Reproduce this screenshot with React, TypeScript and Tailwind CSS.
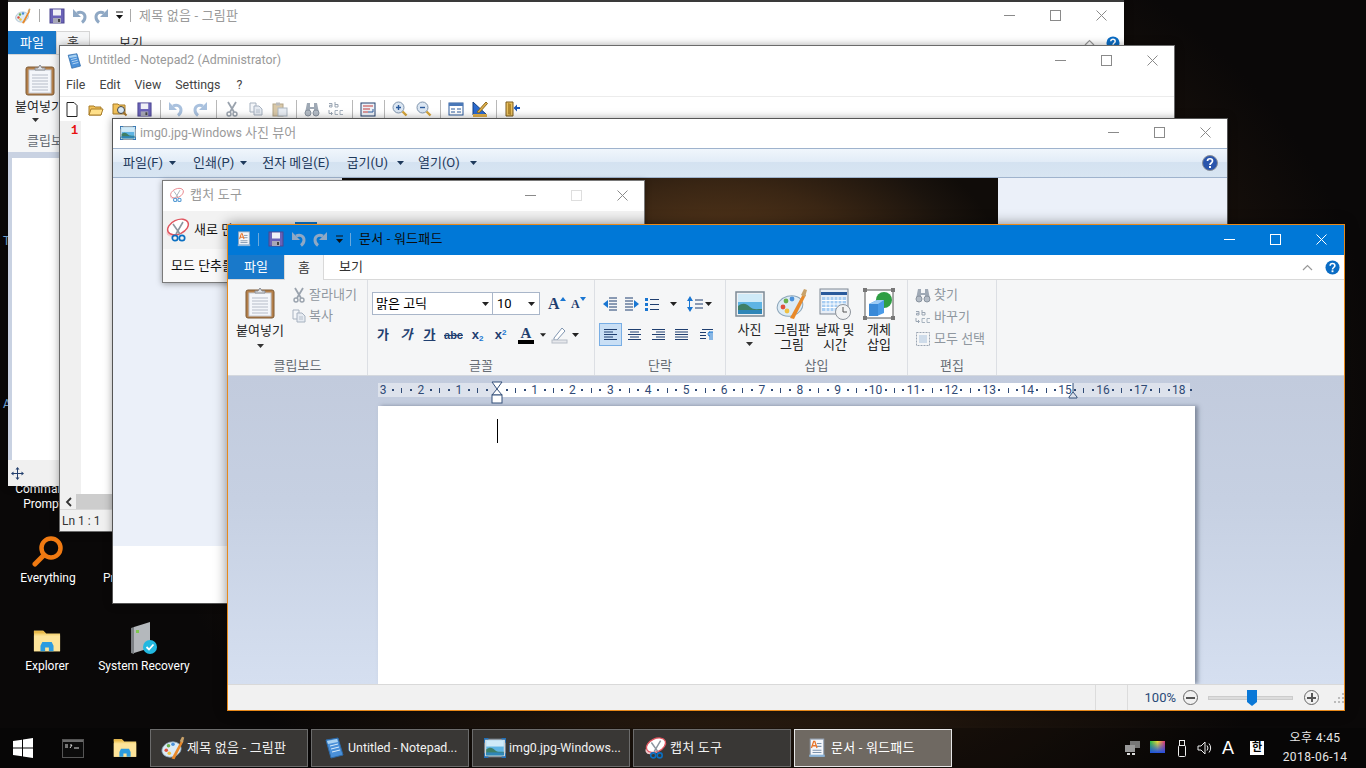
import type { ReactNode } from 'react';

// ---------- small drawn icons ----------
function Clipboard({ w = 30, h = 32 }: { w?: number; h?: number }) {
  return (
    <svg width={w} height={h} viewBox="0 0 30 32">
      <rect x="1" y="3" width="28" height="28" rx="2" fill="#b5804a" stroke="#7e5a35" />
      <rect x="4" y="6" width="22" height="23" fill="#f4f6fa" stroke="#c4c9d3" />
      <path d="M7 11h16M7 14h16M7 17h16M7 20h16M7 23h16M7 26h16" stroke="#b6bcc8" />
      <path d="M10 6V4h3l2-3 2 3h3v2z" fill="#e0e2e6" stroke="#8a8d93" />
    </svg>
  );
}

function Save({ size = 16 }: { size?: number }) {
  return (
    <svg width={size} height={size} viewBox="0 0 16 16">
      <rect x="1" y="1" width="14" height="14" fill="#6a62b8" stroke="#4c4790" />
      <rect x="4" y="1.500" width="8" height="6" fill="#f0f0f6" />
      <rect x="4" y="10" width="8" height="5" fill="#a8a8b8" />
      <rect x="9" y="11" width="2" height="3" fill="#444" />
    </svg>
  );
}

function Undo({ flip = false, color = '#8fa8c4' }: { flip?: boolean; color?: string }) {
  return (
    <svg width="16" height="16" viewBox="0 0 16 16" className={flip ? '-scale-x-100' : ''}>
      <path d="M1 1v8h8z" fill={color} />
      <path d="M5 5c4-2 8 0 8 4 0 2-1 4-3 5.500" fill="none" stroke={color} strokeWidth="3" />
    </svg>
  );
}

function QatDrop({ color = '#111' }: { color?: string }) {
  return (
    <svg width="9" height="9" viewBox="0 0 9 9">
      <path d="M1 1h7" stroke={color} />
      <path d="M1 4h7L4.500 8z" fill={color} />
    </svg>
  );
}

function Arrow({ color = '#333' }: { color?: string }) {
  return (
    <svg width="7" height="4" viewBox="0 0 7 4">
      <path d="M0 0h7L3.500 4z" fill={color} />
    </svg>
  );
}

function PaintIcon({ size = 16 }: { size?: number }) {
  return (
    <svg width={size} height={size} viewBox="0 0 32 32">
      <ellipse cx="14" cy="18" rx="13" ry="10" fill="#dcebf5" stroke="#8aa4b8" transform="rotate(-15 14 18)" />
      <circle cx="7" cy="19" r="2.400" fill="#e0503c" />
      <circle cx="10" cy="13" r="2.400" fill="#6ab04c" />
      <circle cx="16" cy="11" r="2.400" fill="#4a90d9" />
      <circle cx="11" cy="23" r="2.400" fill="#f0c040" />
      <path d="M14 30L27 6l3 1-12 24z" fill="#e8892a" />
      <path d="M25 7l3-6 3 1-2 7z" fill="#c9a26a" />
    </svg>
  );
}

function NotepadIcon({ size = 16 }: { size?: number }) {
  return (
    <svg width={size} height={size} viewBox="0 0 20 22">
      <path d="M2 3l12-2 5 17-12 3z" fill="#4a90d9" stroke="#2d6aa8" />
      <path d="M3 4l10-2 1 3-10 2z" fill="#a9d2f2" />
      <path d="M6 9l8-2M7 12l8-2M8 15l8-2" stroke="#d8ecfb" />
    </svg>
  );
}

function PictureIcon({ w = 16, h = 14, corners = false }: { w?: number; h?: number; corners?: boolean }) {
  return (
    <svg width={w} height={h} viewBox="0 0 30 26">
      <rect x="1" y="1" width="28" height="24" fill="#eef1f4" stroke="#7d8a96" strokeWidth="1.500" />
      <rect x="3" y="3" width="24" height="20" fill="#5fb4e4" />
      <rect x="3" y="3" width="24" height="8" fill="#cfeaf8" />
      <path d="M3 15c5-4 9-2 12 1s7 2 12 2v5H3z" fill="#3f7f66" />
      <rect x="3" y="19" width="24" height="4" fill="#2f86b8" />
      {corners && <path d="M0 6V0h6M24 0h6v6M30 20v6h-6M6 26H0v-6" fill="none" stroke="#1f6fb8" strokeWidth="2.500" />}
    </svg>
  );
}

function Scissors({ size = 16, faint = false }: { size?: number; faint?: boolean }) {
  return (
    <svg width={size} height={size} viewBox="0 0 26 26" className={faint ? 'opacity-70' : ''}>
      <ellipse cx="11" cy="13" rx="10" ry="6" fill="#f3c9cc" transform="rotate(-25 11 13)" />
      <ellipse cx="13" cy="10" rx="11" ry="7" fill="#fff" stroke="#e0555f" strokeWidth="1.400" transform="rotate(-25 13 10)" />
      <path d="M18 5L11 17M8 7l7 10" stroke="#8c96a0" strokeWidth="1.600" />
      <circle cx="10" cy="21" r="2.700" fill="none" stroke="#0a6fc2" strokeWidth="1.700" />
      <circle cx="17" cy="21" r="2.700" fill="none" stroke="#0a6fc2" strokeWidth="1.700" />
    </svg>
  );
}

function WordpadIcon({ size = 16 }: { size?: number }) {
  return (
    <svg width={size} height={size} viewBox="0 0 16 18">
      <rect x="2" y="1" width="12" height="15" fill="#f4f6fa" stroke="#9aa8ba" />
      <path d="M8 5h4M8 7.500h4M4 11h8M4 13h8" stroke="#7c93ad" />
      <path d="M3 9l2-6h1l2 6M4 7h3" fill="none" stroke="#e8762c" strokeWidth="1.200" />
      <rect x="1" y="15" width="14" height="2" fill="#8cb4d8" />
    </svg>
  );
}

function CutIcon() {
  return (
    <svg width="14" height="16" viewBox="0 0 14 16">
      <path d="M3 1l6 10M11 1L5 11" stroke="#9aa3ae" strokeWidth="1.800" />
      <circle cx="4" cy="13" r="2" fill="none" stroke="#9aa3ae" strokeWidth="1.400" />
      <circle cx="10" cy="13" r="2" fill="none" stroke="#9aa3ae" strokeWidth="1.400" />
    </svg>
  );
}

function CopyIcon({ size = 14 }: { size?: number }) {
  return (
    <svg width={size} height={size} viewBox="0 0 14 14">
      <path d="M1 1h6v9H1z" fill="#f4f6f9" stroke="#a7b2c0" />
      <path d="M5 4h5l3 3v6H5z" fill="#e6ebf2" stroke="#a7b2c0" />
      <path d="M7 8h4M7 10h4" stroke="#b6c0cc" />
    </svg>
  );
}

function Binoculars({ size = 16 }: { size?: number }) {
  return (
    <svg width={size} height={size} viewBox="0 0 16 16">
      <path d="M3 2h3v4h4V2h3l2 10h-5V8H6v4H1z" fill="#9fa9b5" />
      <circle cx="4" cy="12" r="3" fill="#b4bcc6" stroke="#89939f" />
      <circle cx="12" cy="12" r="3" fill="#b4bcc6" stroke="#89939f" />
    </svg>
  );
}

function ReplaceIcon() {
  return (
    <svg width="16" height="16" viewBox="0 0 16 16">
      <path d="M1 2.500h3M4 2.500V6H1.500V4.300H4M7 1v5h3V3.500H7" fill="none" stroke="#9aa5b2" />
      <path d="M1 9v3.500h3M3 11l1.500 1.500L3 14" fill="none" stroke="#9aa5b2" />
      <path d="M10 9.500H7v4h3M15 9.500h-3v4h3" fill="none" stroke="#a8b4c0" />
    </svg>
  );
}

function Lines({ kind }: { kind: 'left' | 'center' | 'right' | 'full' }) {
  const rows = [0, 1, 2, 3, 4];
  const d = rows
    .map((r) => {
      const y = 2.500 + r * 2.500;
      const short = r % 2 === 1;
      if (kind === 'full' || !short) return `M1 ${y}h13`;
      if (kind === 'left') return `M1 ${y}h9`;
      if (kind === 'center') return `M3 ${y}h9`;
      return `M5 ${y}h9`;
    })
    .join('');
  return (
    <svg width="15" height="15" viewBox="0 0 15 15">
      <path d={d} stroke="#1f3f70" />
    </svg>
  );
}

function IndentIcon({ right = false }: { right?: boolean }) {
  return (
    <svg width="16" height="14" viewBox="0 0 16 14" className={right ? '-scale-x-100' : ''}>
      <path d="M7 1h8M7 4h8M7 7h8M7 10h8M7 13h8" stroke="#1f3f70" />
      <path d="M1 7l5-4v8z" fill="#1976d2" />
    </svg>
  );
}

function BulletsIcon() {
  return (
    <svg width="16" height="14" viewBox="0 0 16 14">
      <rect x="1" y="1" width="3" height="3" fill="#1976d2" />
      <rect x="1" y="6" width="3" height="3" fill="#1976d2" />
      <rect x="1" y="11" width="3" height="3" fill="#1976d2" />
      <path d="M6 2.500h9M6 7.500h9M6 12.500h9" stroke="#1f3f70" />
    </svg>
  );
}

function SpacingIcon() {
  return (
    <svg width="16" height="16" viewBox="0 0 16 16">
      <path d="M3 0l3 5H0zM3 16l3-5H0z" fill="#1976d2" />
      <path d="M2.500 4v8" stroke="#1976d2" />
      <path d="M8 4h8M8 8h8M8 12h8" stroke="#1f3f70" />
    </svg>
  );
}

function CalendarIcon() {
  return (
    <svg width="32" height="32" viewBox="0 0 32 32">
      <rect x="1" y="1" width="28" height="25" fill="#e8eef6" stroke="#7f8794" />
      <rect x="2" y="4" width="26" height="3" fill="#2a5a9c" />
      <path d="M3 9h24v14H3z" fill="#a8cdf2" />
      <path d="M7 9v14M11 9v14M15 9v14M19 9v14M23 9v14M3 12.500h24M3 16h24M3 19.500h24" stroke="#fff" />
      <circle cx="24" cy="24" r="7.500" fill="#f2f3f4" stroke="#8d939b" />
      <path d="M24 19v5h4" stroke="#555" fill="none" />
    </svg>
  );
}

function ObjectIcon() {
  return (
    <svg width="32" height="32" viewBox="0 0 32 32">
      <rect x="2" y="2" width="28" height="28" fill="#fff" stroke="#555" />
      <circle cx="21" cy="12" r="8" fill="#2f9e44" />
      <path d="M6 16l8-4h7v13l-7 3H6z" fill="#4a9be8" />
      <path d="M6 16l8-4h7l-6 4z" fill="#9ccbf5" />
      <path d="M15 16h-9v12h9z" fill="#3a8ad8" />
      <path d="M0 0h4v4H0zM28 0h4v4h-4zM0 28h4v4H0zM28 28h4v4h-4z" fill="#777" />
    </svg>
  );
}

function SelectAllIcon() {
  return (
    <svg width="16" height="16" viewBox="0 0 16 16">
      <rect x="1.500" y="1.500" width="13" height="13" fill="none" stroke="#9aa5b2" strokeDasharray="2 1" />
      <rect x="4" y="4" width="8" height="8" fill="#cfdcea" />
    </svg>
  );
}

function Help({ size = 15, glossy = false }: { size?: number; glossy?: boolean }) {
  return (
    <svg width={size} height={size} viewBox="0 0 16 16">
      <circle cx="8" cy="8" r="7.500" fill={glossy ? '#2a55ac' : '#0a6cc4'} stroke={glossy ? '#8a8f98' : 'none'} />
      <path d="M5.500 6c0-3 5-3 5 0 0 2-2.500 2-2.500 4" fill="none" stroke="#fff" strokeWidth="1.700" />
      <rect x="7" y="11" width="2" height="2" fill="#fff" />
    </svg>
  );
}

function Magnifier({ minus = false }: { minus?: boolean }) {
  return (
    <svg width="16" height="16" viewBox="0 0 16 16">
      <circle cx="6.500" cy="6.500" r="5.500" fill="#dbe6f2" stroke="#8095ad" />
      <path d="M10.500 10.500l4 4" stroke="#d6a53a" strokeWidth="2.400" />
      <path d={minus ? 'M4 6.500h5' : 'M4 6.500h5M6.500 4v5'} stroke="#2a5a9c" strokeWidth="1.400" />
    </svg>
  );
}

function FontStep({ size, up }: { size: string; up: boolean }) {
  return (
    <span className={`flex items-center font-bold text-[#1f3f70] font-['Liberation_Serif',serif] ${size}`}>
      A
      <svg className="-mt-[10px]" width="6" height="4" viewBox="0 0 6 4">
        <path d={up ? 'M0 4h6L3 0z' : 'M0 0h6L3 4z'} fill="#1976d2" />
      </svg>
    </span>
  );
}

function NotepadTools() {
  const icons: ReactNode[] = [
    <svg key="new" width="12" height="15" viewBox="0 0 12 15"><path d="M1 .5h7l3 3v11H1z" fill="#fff" stroke="#222" /></svg>,
    <svg key="open" width="16" height="15" viewBox="0 0 16 15"><path d="M1 4h5l1 1h6v8H1z" fill="#f2c25a" stroke="#a87c28" /><path d="M3 7h12l-2 6H1z" fill="#ffe08a" stroke="#a87c28" /></svg>,
    <svg key="find" width="16" height="15" viewBox="0 0 16 15"><path d="M1 2h5l1 1h6v9H1z" fill="#f2c25a" stroke="#a87c28" /><circle cx="9" cy="8" r="3.500" fill="#d8e8f6" stroke="#444" /><path d="M11.500 10.500l3 3" stroke="#a8762c" strokeWidth="2" /></svg>,
    <Save key="save" size={15} />,
    null,
    <Undo key="u" color="#a9c1de" />,
    <Undo key="r" flip color="#a9c1de" />,
    null,
    <CutIcon key="cut" />,
    <CopyIcon key="copy" />,
    <svg key="paste" width="16" height="15" viewBox="0 0 16 15"><rect x="1" y="2" width="10" height="12" fill="#d9c8a8" stroke="#b4a588" /><rect x="6" y="6" width="9" height="8" fill="#e8edf3" stroke="#adb7c2" /><rect x="4" y="0.500" width="4" height="3" fill="#bbb" /></svg>,
    null,
    <Binoculars key="bin" />,
    <ReplaceIcon key="rep" />,
    null,
    <svg key="wrap" width="16" height="15" viewBox="0 0 16 15"><rect x="1" y="1" width="14" height="13" fill="#eef2f8" stroke="#24406e" /><path d="M3 4h10M3 7h7M3 10h5" stroke="#c23b3b" /><path d="M8 10h5V7" stroke="#2a5a9c" fill="none" /></svg>,
    null,
    <Magnifier key="z1" />,
    <Magnifier key="z2" minus />,
    null,
    <svg key="scheme" width="16" height="14" viewBox="0 0 16 14"><rect x="1" y="1" width="14" height="12" fill="#fff" stroke="#2a5a9c" /><rect x="1" y="1" width="14" height="3" fill="#4a78b8" /><path d="M3 7h4M9 7h4M3 10h4M9 10h4" stroke="#2a5a9c" /></svg>,
    <svg key="ruler" width="16" height="16" viewBox="0 0 16 16"><path d="M1 1v13h14z" fill="#2a6ad0" stroke="#17407e" /><path d="M1 13h14v3H1z" fill="#e2b04a" /><path d="M5 11L14 1l1.500 1.500L7 12z" fill="#e2b04a" stroke="#8a6a22" /></svg>,
    null,
    <svg key="exit" width="16" height="16" viewBox="0 0 16 16"><path d="M2 1h7v14H2z" fill="#e8c060" stroke="#7a5a1c" /><path d="M4 2l3 1v11l-3-1z" fill="#b48a30" /><path d="M16 6h-3V3.500L9.500 7l3.500 3.500V8h3z" fill="#1a56b8" /></svg>,
  ];
  return (
    <div className="h-[24px] flex items-center">
      {icons.map((icon, i) =>
        icon === null ? (
          <span key={i} className="w-px h-[19px] ml-[4px] mr-[3px] bg-[#b8b8b8]" />
        ) : (
          <span key={i} className="w-[24px] flex justify-center items-center shrink-0">
            {icon}
          </span>
        )
      )}
    </div>
  );
}

// ---------- window parts ----------
function Controls({ active = false, maxOff = false, bordered = false }: { active?: boolean; maxOff?: boolean; bordered?: boolean }) {
  const c = active ? '#fff' : '#8a8a8a';
  return (
    <div className={`flex items-center h-full ${bordered ? '-mr-px' : ''}`}>
      <span className="w-[46px] flex justify-center">
        <svg width="11" height="11" viewBox="0 0 11 11"><path d="M0 5.500h11" stroke={c} /></svg>
      </span>
      <span className="w-[46px] flex justify-center">
        <svg width="11" height="11" viewBox="0 0 11 11"><rect x=".5" y=".5" width="10" height="10" fill="none" stroke={maxOff ? '#dedede' : c} /></svg>
      </span>
      <span className="w-[46px] flex justify-center">
        <svg width="11" height="11" viewBox="0 0 11 11"><path d="M.5.5l10 10M10.500.5l-10 10" stroke={c} /></svg>
      </span>
    </div>
  );
}

function Group({ className, label, children }: { className: string; label: string; children: ReactNode }) {
  return (
    <div className={`h-full flex flex-col border-r border-[#dcdfe4] shrink-0 ${className}`}>
      <div className="flex-1 min-h-0">{children}</div>
      <div className="h-[20px] pt-[3px] text-center text-[13px] leading-[16px] text-[#666c74]">{label}</div>
    </div>
  );
}

function InsertTool({ w, lines, arrow, children }: { w: string; lines: string[]; arrow?: boolean; children: ReactNode }) {
  return (
    <div className={`${w} flex flex-col items-center pt-[8px] text-[13px] leading-[15px] text-[#222] text-center`}>
      <div className="h-[31px] flex items-center justify-center">{children}</div>
      <div className="mt-[3px] whitespace-nowrap">{lines[0]}</div>
      {lines[1] && <div className="whitespace-nowrap">{lines[1]}</div>}
      {arrow && <div className="mt-[5px]"><Arrow /></div>}
    </div>
  );
}

function Ruler() {
  const labels = ['3', '2', '1', '', '1', '2', '3', '4', '5', '6', '7', '8', '9', '10', '11', '12', '13', '14', '15', '16', '17', '18'];
  return (
    <div className="relative w-[812px] h-[14px] flex items-center text-[12px] leading-[14px] text-[#2f4a75] bg-[linear-gradient(90deg,#dde2ec_119px,#ffffff_119px,#ffffff_695px,#dde2ec_695px)]">
      {labels.map((n, i) =>
        i === labels.length - 1 ? (
          <div key={i} className="flex items-center shrink-0">
            <span className="w-[10px] flex justify-center whitespace-nowrap">{n}</span>
            <i className="ml-[6px] w-[2px] h-[2px] bg-[#2f4a75]" />
          </div>
        ) : (
          <div key={i} className="flex items-center shrink-0 w-[37.9px]">
            <span className="w-[10px] shrink-0 whitespace-nowrap flex justify-center">{n}</span>
            <span className="w-[27.9px] flex items-center justify-between px-[4px]">
              <i className="w-[2px] h-[2px] bg-[#2f4a75]" />
              <i className="w-px h-[5px] bg-[#2f4a75]" />
              <i className="w-[2px] h-[2px] bg-[#2f4a75]" />
            </span>
          </div>
        )
      )}
      {/* indent markers */}
      <svg className="absolute left-[113px] -top-[2px]" width="12" height="23" viewBox="0 0 12 23">
        <path d="M1 1h10L6 8zM6 8l5 6H1z" fill="#fff" stroke="#35507a" />
        <rect x="1" y="14" width="10" height="8" fill="#fff" stroke="#35507a" />
      </svg>
      <svg className="absolute left-[690px] top-0" width="10" height="16" viewBox="0 0 10 16">
        <path d="M5 0v9" stroke="#35507a" />
        <path d="M5 9l4 5v1H1v-1z" fill="#dde2ec" stroke="#35507a" />
      </svg>
    </div>
  );
}

function DesktopIcon({ className, label, children }: { className: string; label: string; children: ReactNode }) {
  return (
    <div className={`absolute w-[80px] flex flex-col items-center text-[12px] leading-[16px] text-white ${className}`}>
      <div className="h-[38px] flex items-end justify-center">{children}</div>
      <div className="mt-[3px] whitespace-nowrap">{label}</div>
    </div>
  );
}

function FolderIcon({ size = 30 }: { size?: number }) {
  return (
    <svg width={size} height={size} viewBox="0 0 30 30">
      <path d="M1 4h10l3 3h15v19H1z" fill="#f6d67a" />
      <path d="M1 4h10l3 3H1z" fill="#e8b94a" />
      <path d="M1 9h28v17H1z" fill="#fde49a" />
      <path d="M8 26v-6l2-4h10l2 4v6h-5v-4h-4v4z" fill="#2b9be0" />
    </svg>
  );
}

function TaskButton({ icon, label, size, active = false }: { icon: ReactNode; label: string; size: string; active?: boolean }) {
  return (
    <div
      className={`w-[158px] h-[38px] shrink-0 flex items-center border pl-[8px] ${size} ${
        active ? 'bg-[#6f6962] border-[#e6e6e6] text-white' : 'bg-[#393735] border-[#6c6c6c] text-[#f2f2f2]'
      }`}
    >
      <span className="w-[28px] flex justify-center shrink-0">{icon}</span>
      <span className="whitespace-nowrap">{label}</span>
    </div>
  );
}

export default function App() {
  return (
    <div className="relative w-[1366px] h-[768px] overflow-hidden flex flex-col font-['Roboto','Noto_Sans_CJK_KR',sans-serif] bg-[radial-gradient(ellipse_620px_520px_at_760px_400px,#5c3b1c_0%,#3a2614_40%,#1c130c_72%,#0a0808_100%)]">
      {/* Desktop */}
      <div className="relative flex-1">
        <span className="absolute left-[3px] top-[232px] text-[12px] text-[#7fb6e6]">T</span>
        <span className="absolute left-[3px] top-[395px] text-[12px] text-[#7fb6e6]">A</span>
        <div className="absolute left-0 top-[482px] w-[86px] text-center text-[12px] leading-[15px] text-white">
          Command
          <br />
          Prompt
        </div>
        <DesktopIcon className="left-[8px] top-[529px]" label="Everything">
          <svg width="32" height="32" viewBox="0 0 32 32">
            <circle cx="19" cy="13" r="9.500" fill="none" stroke="#f07a12" strokeWidth="4.500" />
            <path d="M12 20L3 29" stroke="#f07a12" strokeWidth="5" strokeLinecap="round" />
          </svg>
        </DesktopIcon>
        <span className="absolute left-[103px] top-[569px] text-[12px] text-white">Pr</span>
        <DesktopIcon className="left-[7px] top-[617px]" label="Explorer">
          <FolderIcon size={28} />
        </DesktopIcon>
        <DesktopIcon className="left-[104px] top-[617px]" label="System Recovery">
          <svg width="28" height="34" viewBox="0 0 28 34">
            <path d="M4 6L20 1v26L4 32z" fill="#b4b8bc" />
            <path d="M4 6L1 7v25l3 1z" fill="#7c8084" />
            <rect x="6" y="9" width="3" height="3" fill="#7dc850" />
            <circle cx="20" cy="26" r="7" fill="#22b8e0" />
            <path d="M16.500 26l2.500 2.500 4.500-5" stroke="#fff" strokeWidth="1.800" fill="none" />
          </svg>
        </DesktopIcon>

        {/* Paint */}
        <div className="absolute left-[8px] top-0 w-[1116px] h-[486px] bg-white border-t-2 border-[#3a3a3a] flex flex-col shadow-[0_0_8px_rgba(0,0,0,0.4)]">
          <div className="h-[29px] flex items-center pb-[2px] shrink-0 text-[13px] tracking-[0.2px] text-[#9a9a9a]">
            <span className="ml-[7px] w-[16px] flex"><PaintIcon /></span>
            <span className="w-px h-[13px] bg-[#aaa] ml-[8px]" />
            <span className="ml-[9px] flex"><Save /></span>
            <span className="ml-[7px] flex"><Undo /></span>
            <span className="ml-[5px] flex"><Undo flip /></span>
            <span className="ml-[6px] flex"><QatDrop /></span>
            <span className="w-px h-[13px] bg-[#aaa] ml-[6px]" />
            <span className="ml-[8px] flex-1">제목 없음 - 그림판</span>
            <Controls />
          </div>
          <div className="h-[24px] flex items-stretch shrink-0 text-[13px] border-b border-[#d5d5d5]">
            <span className="w-[48px] bg-[#1979ca] text-white flex items-center justify-center">파일</span>
            <span className="w-[34px] border border-b-0 border-[#d5d5d5] bg-[#f5f6f7] flex items-center justify-center text-[#333]">홈</span>
            <span className="ml-[29px] flex items-center text-[#333]">보기</span>
            <span className="ml-auto mr-[4px] flex items-center gap-[11px]">
              <svg width="11" height="7" viewBox="0 0 11 7"><path d="M1 6l4.500-4.500L10 6" fill="none" stroke="#999" strokeWidth="1.200" /></svg>
              <Help size={14} />
            </span>
          </div>
          <div className="h-[97px] bg-[#f5f6f7] shrink-0 flex flex-col items-start text-[13px] text-[#222]">
            <div className="ml-[17px] mt-[9px] flex"><Clipboard /></div>
            <div className="ml-[7px] mt-[3px] leading-[16px] whitespace-nowrap">붙여넣기</div>
            <div className="ml-[24px] mt-[3px] leading-none flex"><Arrow /></div>
            <div className="ml-[19px] mt-[11px] leading-[16px] text-[#666c74] whitespace-nowrap">클립보</div>
          </div>
          <div className="flex-1 bg-[#c9d2e2] pl-[4px] pt-[6px] min-h-0">
            <div className="h-full bg-white" />
          </div>
          <div className="h-[26px] bg-[#f0f0f0] flex items-center pl-[3px] shrink-0">
            <svg width="13" height="13" viewBox="0 0 13 13"><path d="M6.500 0l2 2.500h-1.500V6h3.500V4.500L13 6.500 10.500 8.500V7H7v3.500h1.500L6.500 13l-2-2.500H6V7H2.500v1.500L0 6.500 2.500 4.500V6H6V2.500H4.500z" fill="#24406e" /></svg>
          </div>
        </div>

        {/* Notepad2 */}
        <div className="absolute left-[59px] top-[45px] w-[1116px] h-[487px] bg-white border border-[#6b6b6b] flex flex-col shadow-[0_0_8px_rgba(0,0,0,0.35)]">
          <div className="h-[29px] shrink-0 flex items-center text-[12.400px] text-[#9a9a9a]">
            <span className="ml-[6px] flex"><NotepadIcon /></span>
            <span className="ml-[6px] flex-1">Untitled - Notepad2 (Administrator)</span>
            <Controls bordered />
          </div>
          <div className="h-[21px] shrink-0 flex items-center gap-[14px] pl-[6px] text-[12.400px] text-[#444]">
            <span>File</span>
            <span>Edit</span>
            <span>View</span>
            <span>Settings</span>
            <span className="ml-[2px]">?</span>
          </div>
          <div className="border-t border-[#ececec]">
            <NotepadTools />
          </div>
          <div className="flex-1 flex min-h-0">
            <div className="w-[21px] bg-[#f0f0f0] pl-[11px] pt-[2px] text-[12px] leading-[16px] font-bold text-[#e81010] font-['Liberation_Mono',monospace]">1</div>
            <div className="flex-1 bg-white" />
          </div>
          <div className="h-[15px] shrink-0 bg-[#f0f0f0] flex items-center">
            <span className="w-[16px] flex justify-center">
              <svg width="7" height="10" viewBox="0 0 7 10"><path d="M6 1L2 5l4 4" fill="none" stroke="#333" strokeWidth="1.800" /></svg>
            </span>
            <div className="flex-1 h-full bg-[#cdcdcd]" />
          </div>
          <div className="h-[22px] shrink-0 bg-[#f0f0f0] border-t border-[#d8d8d8] flex items-center pl-[2px] text-[12px] text-[#333]">Ln 1 : 1</div>
        </div>

        {/* Photo viewer */}
        <div className="absolute left-[112px] top-[118px] w-[1116px] h-[486px] bg-white border border-[#555] flex flex-col shadow-[0_0_8px_rgba(0,0,0,0.35)]">
          <div className="h-[29px] shrink-0 flex items-center pb-[2px] text-[12.400px] text-[#9a9a9a]">
            <span className="ml-[7px] flex"><PictureIcon corners /></span>
            <span className="ml-[4px] flex-1">
              img0.jpg-Windows <span className="text-[13px]">사진 뷰어</span>
            </span>
            <Controls bordered />
          </div>
          <div className="h-[30px] shrink-0 border-y border-[#9fb3cd] bg-[linear-gradient(180deg,#f0f6fc_0%,#e2ecf7_45%,#d4e2f1_46%,#d8e5f2_100%)] flex items-center text-[13px] text-[#1e395b] pl-[10px]">
            <span>파일(F)</span>
            <span className="ml-[6px] flex"><Arrow color="#1e395b" /></span>
            <span className="ml-[17px]">인쇄(P)</span>
            <span className="ml-[6px] flex"><Arrow color="#1e395b" /></span>
            <span className="ml-[15px]">전자 메일(E)</span>
            <span className="ml-[17px]">굽기(U)</span>
            <span className="ml-[9px] flex"><Arrow color="#1e395b" /></span>
            <span className="ml-[14px]">열기(O)</span>
            <span className="ml-[10px] flex"><Arrow color="#1e395b" /></span>
            <span className="ml-auto mr-[9px] flex"><Help size={16} glossy /></span>
          </div>
          <div className="h-[368px] shrink-0 bg-[#ebf0f9] flex justify-center">
            <div className="w-[656px] h-full bg-[radial-gradient(ellipse_280px_150px_at_378px_82px,#5c3b1c_0%,#3a2614_50%,#1a130d_85%,#100c09_100%)]" />
          </div>
          <div className="flex-1 bg-white" />
        </div>

        {/* Snipping tool */}
        <div className="absolute left-[162px] top-[180px] w-[483px] h-[103px] bg-white border border-[#7a7a7a] flex flex-col shadow-[0_1px_6px_rgba(0,0,0,0.35)]">
          <div className="h-[30px] shrink-0 flex items-center pb-[2px] text-[13px] tracking-[0.2px] text-[#9a9a9a]">
            <span className="ml-[6px] flex"><Scissors faint /></span>
            <span className="ml-[5px] flex-1">캡처 도구</span>
            <Controls maxOff bordered />
          </div>
          <div className="h-[38px] shrink-0 bg-[#f2f2f2] flex items-center text-[13px] text-[#111]">
            <span className="ml-[2px] flex"><Scissors size={26} /></span>
            <span className="ml-[3px] whitespace-nowrap">새로 만</span>
            <span className="self-start mt-[11px] ml-[62px] w-[22px] h-[3px] bg-[#0a78d0]" />
          </div>
          <div className="flex-1 bg-[#f9f9f9] flex items-center pl-[8px] text-[13px] text-[#111] whitespace-nowrap">모드 단추를</div>
        </div>

        {/* WordPad */}
        <div className="absolute left-[227px] top-[224px] w-[1118px] h-[487px] bg-white border border-[#e8891a] flex flex-col shadow-[0_0_12px_rgba(0,0,0,0.45)]">
          <div className="h-[30px] shrink-0 bg-[#0078d7] flex items-center pb-[2px] text-[13px] tracking-[0.2px] text-[#0c0c0c]">
            <span className="ml-[8px] flex"><WordpadIcon /></span>
            <span className="w-px h-[13px] bg-[#6aa9dd] ml-[6px]" />
            <span className="ml-[9px] flex"><Save /></span>
            <span className="ml-[7px] flex"><Undo /></span>
            <span className="ml-[5px] flex"><Undo flip /></span>
            <span className="ml-[7px] flex"><QatDrop /></span>
            <span className="w-px h-[13px] bg-[#6aa9dd] ml-[6px]" />
            <span className="ml-[8px] flex-1">문서 - 워드패드</span>
            <Controls active />
          </div>
          <div className="h-[25px] shrink-0 flex items-stretch border-b border-[#d9d9d9] text-[13px] text-[#333]">
            <span className="w-[56px] bg-[#1979ca] text-white flex items-center justify-center">파일</span>
            <span className="w-[40px] -mb-px bg-[#f5f6f7] border-x border-[#d9d9d9] flex items-center justify-center">홈</span>
            <span className="ml-[15px] flex items-center">보기</span>
            <span className="ml-auto flex items-center gap-[12px] pr-[4px]">
              <svg width="11" height="7" viewBox="0 0 11 7"><path d="M1 6l4.500-4.500L10 6" fill="none" stroke="#999" strokeWidth="1.200" /></svg>
              <Help size={15} />
            </span>
          </div>

          {/* Ribbon */}
          <div className="h-[96px] shrink-0 bg-[#f5f6f7] flex border-b border-[#d4d8de]">
            <Group className="w-[140px]" label="클립보드">
              <div className="flex h-full text-[13px] text-[#222]">
                <div className="w-[64px] flex flex-col items-center pt-[7px]">
                  <Clipboard />
                  <div className="mt-[4px] leading-[16px] whitespace-nowrap">붙여넣기</div>
                  <div className="mt-[5px] flex"><Arrow /></div>
                </div>
                <div className="flex flex-col pt-[4px] text-[#8f979f]">
                  <div className="h-[21px] flex items-center gap-[3px] whitespace-nowrap"><CutIcon />잘라내기</div>
                  <div className="h-[21px] flex items-center gap-[3px]"><CopyIcon />복사</div>
                </div>
              </div>
            </Group>

            <Group className="w-[227px]" label="글꼴">
              <div className="pl-[4px] pt-[12px] text-[13px]">
                <div className="flex items-center h-[23px]">
                  <div className="w-[121px] h-full bg-white border border-[#a9b6c9] flex items-center justify-between px-[3px]">
                    맑은 고딕<Arrow color="#222" />
                  </div>
                  <div className="w-[47px] h-full bg-white border border-l-0 border-[#a9b6c9] flex items-center justify-between px-[4px]">
                    10<Arrow color="#222" />
                  </div>
                  <span className="ml-[8px] w-[23px]"><FontStep size="text-[16px]" up /></span>
                  <FontStep size="text-[12px]" up={false} />
                </div>
                <div className="mt-[8px] -ml-[1px] h-[24px] flex items-center text-[#1f3f70] font-bold">
                  <span className="w-[24px] text-center">가</span>
                  <span className="w-[23px] text-center italic">가</span>
                  <span className="w-[23px] text-center underline">가</span>
                  <span className="w-[25px] text-center text-[11px] line-through font-['Liberation_Sans',sans-serif]">abc</span>
                  <span className="w-[23px] text-center font-['Liberation_Sans',sans-serif]">x<sub className="text-[8px] text-[#1976d2]">2</sub></span>
                  <span className="w-[23px] text-center font-['Liberation_Sans',sans-serif]">x<sup className="text-[8px] text-[#1976d2]">2</sup></span>
                  <span className="w-[28px] flex flex-col items-center leading-[13px] text-[15px] font-['Liberation_Serif',serif]">A<i className="w-[16px] h-[4px] bg-black" /></span>
                  <span className="w-[6px] flex"><Arrow color="#222" /></span>
                  <span className="w-[26px] flex justify-center">
                    <svg width="17" height="17" viewBox="0 0 17 17"><path d="M3 11L11 1l3 3-8 9H3z" fill="#fff" stroke="#7f95b0" /><rect x="1" y="13" width="15" height="3" fill="#e6e8ec" stroke="#b8bec8" /></svg>
                  </span>
                  <span className="flex"><Arrow color="#222" /></span>
                </div>
              </div>
            </Group>

            <Group className="w-[131px]" label="단락">
              <div className="pl-[4px] pt-[12px]">
                <div className="flex items-center h-[23px]">
                  <span className="w-[22px] flex justify-center"><IndentIcon /></span>
                  <span className="w-[22px] flex justify-center"><IndentIcon right /></span>
                  <span className="w-[18px] flex justify-center"><BulletsIcon /></span>
                  <span className="w-[24px] flex justify-center"><Arrow color="#222" /></span>
                  <span className="w-[20px] flex justify-center"><SpacingIcon /></span>
                  <span className="flex"><Arrow color="#222" /></span>
                </div>
                <div className="mt-[8px] h-[23px] flex items-center">
                  <span className="w-[23px] h-[23px] bg-[#c9dff5] border border-[#78aee5] flex items-center justify-center"><Lines kind="left" /></span>
                  <span className="w-[24px] flex justify-center"><Lines kind="center" /></span>
                  <span className="w-[24px] flex justify-center"><Lines kind="right" /></span>
                  <span className="w-[23px] flex justify-center"><Lines kind="full" /></span>
                  <span className="w-[26px] flex justify-center">
                    <svg width="15" height="15" viewBox="0 0 15 15"><path d="M3 2.500h11M1 5.500h6M1 8.500h6M1 11.500h6" stroke="#1f3f70" /><path d="M10 5h4M11 5v8M13 5v8M11 5a2 2 0 0 0 0 4" stroke="#1976d2" fill="none" /></svg>
                  </span>
                </div>
              </div>
            </Group>

            <Group className="w-[182px]" label="삽입">
              <div className="flex pl-[2px]">
                <InsertTool w="w-[43px]" lines={['사진']} arrow><PictureIcon w={30} h={26} /></InsertTool>
                <InsertTool w="w-[42px]" lines={['그림판', '그림']}><PaintIcon size={32} /></InsertTool>
                <InsertTool w="w-[44px]" lines={['날짜 및', '시간']}><CalendarIcon /></InsertTool>
                <InsertTool w="w-[44px]" lines={['개체', '삽입']}><ObjectIcon /></InsertTool>
              </div>
            </Group>

            <Group className="w-[89px]" label="편집">
              <div className="pl-[7px] pt-[4px] text-[13px] text-[#8f979f]">
                <div className="h-[22px] flex items-center gap-[3px]"><Binoculars />찾기</div>
                <div className="h-[22px] flex items-center gap-[3px]"><ReplaceIcon />바꾸기</div>
                <div className="h-[22px] flex items-center gap-[3px] whitespace-nowrap"><SelectAllIcon />모두 선택</div>
              </div>
            </Group>
          </div>

          {/* Document area */}
          <div className="flex-1 min-h-0 bg-[linear-gradient(180deg,#c2cbdd_0%,#c6d0e2_40%,#d5dff0_100%)] pl-[150px] pt-[7px] flex flex-col">
            <Ruler />
            <div className="mt-[9px] w-[817px] flex-1 bg-white shadow-[3px_0_4px_rgba(70,80,100,0.55)] pl-[119px] pt-[13px]">
              <div className="w-px h-[24px] bg-black" />
            </div>
          </div>

          {/* Status bar */}
          <div className="h-[26px] shrink-0 bg-[#f1f1f1] border-t border-[#d9d9d9] flex items-center text-[13px] text-[#2a4a78]">
            <span className="ml-auto w-[32px] h-full border-l border-[#dcdcdc]" />
            <span className="w-[18px] h-full border-l border-[#dcdcdc]" />
            <span>100%</span>
            <span className="ml-[7px] w-[15px] h-[15px] rounded-full border border-[#666] flex items-center justify-center"><i className="w-[9px] h-[2px] bg-[#555]" /></span>
            <div className="ml-[10px] w-[85px] h-[4px] bg-[#dcdcdc] border border-[#ccc] flex items-center pl-[38px]">
              <svg className="shrink-0" width="10" height="16" viewBox="0 0 10 16"><path d="M0 0h10v12l-5 4-5-4z" fill="#0a78d7" /></svg>
            </div>
            <span className="ml-[11px] w-[15px] h-[15px] rounded-full border border-[#666] flex items-center justify-center relative">
              <i className="w-[9px] h-[2px] bg-[#555]" />
              <i className="absolute w-[2px] h-[9px] bg-[#555]" />
            </span>
            <span className="ml-[11px] w-[14px] flex justify-end">
              <svg width="10" height="10" viewBox="0 0 10 10"><path d="M8 0h2v2H8zM4 4h2v2H4zM8 4h2v2H8zM0 8h2v2H0zM4 8h2v2H4zM8 8h2v2H8z" fill="#bbb" /></svg>
            </span>
          </div>
        </div>
      </div>

      {/* Taskbar */}
      <div className="h-[40px] shrink-0 flex items-center bg-black/25 text-white">
        <span className="w-[46px] flex justify-center">
          <svg width="20" height="20" viewBox="0 0 20 20"><path d="M0 3l9-1.300V9.500H0zM10 1.500L20 0v9.500H10zM0 10.500h9v7.800L0 17zM10 10.500h10V20l-10-1.500z" fill="#fff" /></svg>
        </span>
        <span className="w-[54px] flex justify-center">
          <svg width="22" height="19" viewBox="0 0 22 19"><rect x=".5" y=".5" width="21" height="18" fill="#0c0c0c" stroke="#555" /><rect x="1" y="1" width="20" height="2" fill="#6a6a6a" /><path d="M3 6h3M3 8h3M8 6h2l-2 3M12 9h5" stroke="#ddd" /></svg>
        </span>
        <span className="w-[50px] flex justify-center"><FolderIcon size={24} /></span>
        <div className="flex gap-[3px]">
          <TaskButton size="text-[13px] tracking-[0.2px]" icon={<PaintIcon size={24} />} label="제목 없음 - 그림판" />
          <TaskButton size="text-[12.400px]" icon={<NotepadIcon size={22} />} label="Untitled - Notepad..." />
          <TaskButton size="text-[12.400px]" icon={<PictureIcon w={22} h={20} corners />} label="img0.jpg-Windows..." />
          <TaskButton size="text-[13px] tracking-[0.2px]" icon={<Scissors size={24} />} label="캡처 도구" />
          <TaskButton size="text-[13px] tracking-[0.2px]" icon={<WordpadIcon size={20} />} label="문서 - 워드패드" active />
        </div>
        <div className="ml-auto flex items-center pr-[10px]">
          <span className="w-[24px] flex justify-center">
            <svg width="16" height="14" viewBox="0 0 16 14"><rect x="5" y="0" width="10" height="7" fill="#777" /><rect x="0" y="4" width="10" height="7" fill="#999" /><path d="M2 13h3M7 13h3" stroke="#ddd" strokeWidth="2" /></svg>
          </span>
          <span className="w-[24px] flex justify-center">
            <svg width="15" height="14" viewBox="0 0 15 14"><defs><linearGradient id="c" x1="0" y1="0" x2="1" y2="0"><stop offset="0" stopColor="#20c040" /><stop offset=".5" stopColor="#f0e030" /><stop offset="1" stopColor="#e0307a" /></linearGradient><linearGradient id="d" x1="0" y1="0" x2="0" y2="1"><stop offset="0" stopColor="#2050e0" stopOpacity="0" /><stop offset="1" stopColor="#2050e0" /></linearGradient></defs><rect width="15" height="12" fill="url(#c)" /><rect width="15" height="12" fill="url(#d)" /></svg>
          </span>
          <span className="w-[25px] flex justify-center">
            <svg width="12" height="17" viewBox="0 0 12 17"><rect x="2.500" y="5.500" width="7" height="11" rx="1" fill="none" stroke="#eee" /><rect x="3.500" y=".5" width="5" height="5" fill="none" stroke="#eee" /></svg>
          </span>
          <span className="w-[22px] flex justify-center">
            <svg width="17" height="14" viewBox="0 0 17 14"><path d="M1 5h3l4-4v12L4 9H1z" fill="none" stroke="#eee" /><path d="M10 4.500a4 4 0 0 1 0 5M12 2.500a7 7 0 0 1 0 9" fill="none" stroke="#eee" /></svg>
          </span>
          <span className="w-[24px] text-center text-[18px] leading-none font-['Liberation_Sans',sans-serif]">A</span>
          <span className="w-[34px] flex justify-center">
            <span className="w-[14px] h-[14px] bg-white text-black text-[11px] leading-[14px] text-center font-bold">한</span>
          </span>
          <div className="w-[82px] text-center text-[12px] leading-[19px] text-[#e8e8e8] tracking-[0.4px]">
            <div>오후 4:45</div>
            <div>2018-06-14</div>
          </div>
        </div>
      </div>
    </div>
  );
}
